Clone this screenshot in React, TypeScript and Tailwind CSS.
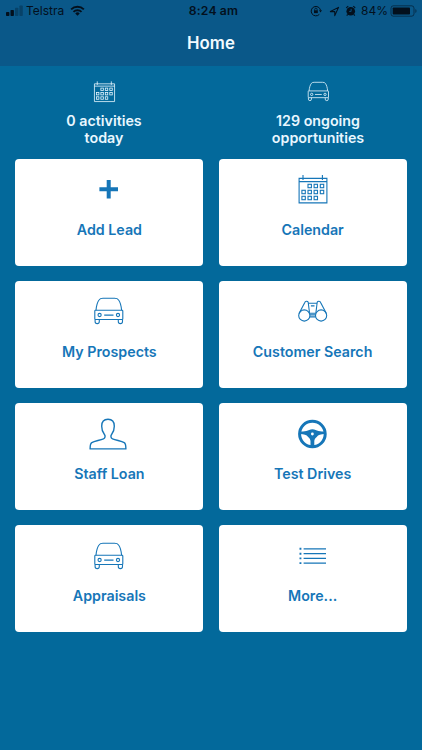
import type { ReactNode } from "react";

type IconProps = { className?: string };

function Svg({ className = "size-10", children }: IconProps & { children: ReactNode }) {
  return (
    <svg viewBox="0 0 40 40" fill="none" stroke="currentColor" strokeWidth="1.1" className={`shrink-0 ${className}`}>
      {children}
    </svg>
  );
}

const days = [
  [16.7, 17], [22.8, 17], [29, 17],
  [10.6, 23], [16.7, 23], [22.8, 23], [29, 23],
  [10.6, 29], [16.7, 29], [22.8, 29],
];

function CalendarIcon({ className }: IconProps) {
  return (
    <Svg className={className}>
      <path d="M6.1 9.4H33.9V33.9H6.1ZM6.1 12.6H33.9M10 6V11M29.4 6V11" />
      {days.map(([x, y]) => (
        <rect key={`${x}-${y}`} x={x - 1.7} y={y - 1.7} width="3.4" height="3.4" />
      ))}
    </Svg>
  );
}

function CarIcon({ className }: IconProps) {
  return (
    <Svg className={className}>
      <path d="M7 19.2C7.4 14.6 8.5 11.1 10 9C10.8 7.8 12 7.3 14 7.3H25.6C27.6 7.3 28.8 7.8 29.6 9C31.1 11.1 32.2 14.6 32.6 19.2" />
      <rect x="5.8" y="19.2" width="28" height="9.3" rx=".7" />
      <path d="M6.1 28.5V30.5a2.1 2.1 0 0 0 4.2 0V28.5M29.3 28.5V30.5a2.1 2.1 0 0 0 4.2 0V28.5M15.2 24.1H24.5" />
      <circle cx="10.6" cy="24" r="1.6" />
      <circle cx="29" cy="24" r="1.6" />
    </Svg>
  );
}

function PlusIcon() {
  return (
    <Svg>
      <path d="M10.4 20.2H29M19.7 10.9V29.5" strokeWidth="4" />
    </Svg>
  );
}

function BinocularsIcon() {
  return (
    <Svg>
      <circle cx="11.3" cy="24.5" r="5.6" />
      <circle cx="28.1" cy="24.5" r="5.6" />
      <path d="M6 22.6L11.8 11.5C12.2 10 14.6 9.8 15.2 11.3L16.5 21.8M33.4 22.6L27.6 11.5C27.2 10 24.8 9.8 24.2 11.3L22.9 21.8M15.4 12.2H24M17.9 14.9H21.5M16.5 22.3H22.9M16.8 23.9H22.6M16.8 25.9H22.6" />
    </Svg>
  );
}

function PersonIcon() {
  return (
    <Svg>
      <path
        strokeWidth="1.4"
        strokeLinejoin="round"
        d="M19 5.3C14.8 5.3 12.7 8.1 12.7 12.2C12.7 15.4 13.7 18.3 15.3 20.2C16.6 21.8 16.3 23.9 14.4 24.8C11.2 26.2 5.8 27.1 2.8 28.6C1.2 29.5 1.1 31.5 1.1 34.9H36.9C36.9 31.5 36.8 29.5 35.2 28.6C32.2 27.1 26.8 26.2 23.6 24.8C21.7 23.9 21.4 21.8 22.7 20.2C24.3 18.3 25.3 15.4 25.3 12.2C25.3 8.1 23.2 5.3 19 5.3Z"
      />
    </Svg>
  );
}

function WheelIcon() {
  return (
    <Svg>
      <g transform="translate(-.4 -.2)">
        <circle cx="19.8" cy="20.2" r="12.8" strokeWidth="3" />
        <path
          fill="currentColor"
          stroke="none"
          fillRule="evenodd"
          d="M7.5 17.4C11 17.9 14.3 17.5 16.6 16.2C18.4 15.3 21.2 15.3 23 16.2C25.3 17.5 28.6 17.9 32.1 17.4V20.3C28.3 20.3 25.6 21.3 24.1 23.1C22.4 24.7 21.7 25.6 21.7 27.5V33H17.9V27.5C17.9 25.6 17.2 24.7 15.5 23.1C14 21.3 11.3 20.3 7.5 20.3ZM19.8 18.8a1.4 1.4 0 1 0 0 2.8a1.4 1.4 0 0 0 0-2.8Z"
        />
      </g>
    </Svg>
  );
}

function ListIcon() {
  return (
    <Svg>
      <path strokeWidth="1.2" d="M10.6 12.8H33M10.6 17.7H33M10.6 22.4H33M10.6 27.1H33" />
      <path strokeWidth="1.9" d="M6.5 12.8H8.4M6.5 17.7H8.4M6.5 22.4H8.4M6.5 27.1H8.4" />
    </Svg>
  );
}

function StatusBar() {
  return (
    <div className="grid h-[22px] grid-cols-[1fr_auto_1fr] items-center px-[6px] text-[12px] leading-none text-[#03101d]">
      <div className="flex items-center">
        <svg viewBox="0 0 18 12" className="h-3 w-[18px]" fill="currentColor">
          <rect x="0" y="7" width="3.4" height="4" rx=".8" />
          <rect x="4.5" y="5" width="3.4" height="6" rx=".8" />
          <rect x="9" y="2.8" width="3.4" height="8.2" rx=".8" opacity=".3" />
          <rect x="13.4" y=".5" width="3.4" height="10.5" rx=".8" opacity=".3" />
        </svg>
        <span className="ml-[2px] text-[12px]">Telstra</span>
        <svg viewBox="0 0 16 12" className="ml-[6px] h-[11.5px] w-[15px]" fill="none" stroke="currentColor" strokeWidth="2">
          <path d="M1.2 4.5A9.7 9.7 0 0 1 14.8 4.5M3.7 7.2A6.2 6.2 0 0 1 12.3 7.2" />
          <path d="M5.6 8.8A3.5 3.5 0 0 1 10.4 8.8L8 11.3Z" fill="currentColor" stroke="none" />
        </svg>
      </div>
      <span className="pl-[5px] text-[12.2px] font-semibold tracking-[0.15px]">8:24 am</span>
      <div className="-mr-[2px] flex items-center justify-end">
        <svg viewBox="0 0 12 12" className="mr-[2px] size-3" fill="none" stroke="currentColor">
          <path d="M9.3 9.4A4.7 4.7 0 1 1 10.5 5.2" />
          <path d="M9 5.2H12L10.5 7.4Z" fill="currentColor" stroke="none" />
          <path d="M4.7 5.5V4.4a1.2 1.2 0 0 1 2.4 0v1.1" strokeWidth=".8" />
          <rect x="4" y="5.3" width="3.8" height="2.8" fill="currentColor" stroke="none" />
        </svg>
        <svg viewBox="0 0 12 12" className="ml-[5px] size-[11px]" fill="none" stroke="currentColor" strokeWidth="1.2">
          <path d="M1.5 6.1L10.4 1.5L6.3 10.5V6.1Z" strokeLinejoin="round" />
        </svg>
        <svg viewBox="0 0 12 12" className="ml-[5px] size-[11.5px]" fill="currentColor">
          <circle cx="6" cy="6.5" r="4.5" />
          <path d="M1.3 3L3.4 1.2M10.7 3L8.6 1.2M2.8 9.8L1.8 11M9.2 9.8L10.2 11" stroke="currentColor" strokeWidth="1.2" />
          <path d="M6.4 4V6.7H4.4" stroke="#0a5889" fill="none" strokeWidth=".9" />
        </svg>
        <span className="ml-[5px] text-[12px]">84%</span>
        <svg viewBox="0 0 28 12" className="ml-[2px] h-3 w-7" fill="none">
          <rect x="1" y=".8" width="23" height="10.4" rx="2.4" stroke="currentColor" opacity=".55" />
          <rect x="2.7" y="2.5" width="17.3" height="7" rx=".8" fill="currentColor" />
          <path d="M25.3 4V8C27 7.3 27 4.7 25.3 4Z" fill="currentColor" opacity=".55" />
        </svg>
      </div>
    </div>
  );
}

const tiles: { label: string; icon: ReactNode }[] = [
  { label: "Add Lead", icon: <PlusIcon /> },
  { label: "Calendar", icon: <CalendarIcon /> },
  { label: "My Prospects", icon: <CarIcon /> },
  { label: "Customer Search", icon: <BinocularsIcon /> },
  { label: "Staff Loan", icon: <PersonIcon /> },
  { label: "Test Drives", icon: <WheelIcon /> },
  { label: "Appraisals", icon: <CarIcon /> },
  { label: "More...", icon: <ListIcon /> },
];

function Stat({ icon, lines }: { icon: ReactNode; lines: string[] }) {
  return (
    <div className="flex w-[170px] flex-col items-center text-center text-[14.25px] leading-[17px] font-semibold text-[#e9f7ff]">
      {icon}
      <div className="mt-[6px]">
        {lines.map((line) => (
          <div key={line}>{line}</div>
        ))}
      </div>
    </div>
  );
}

export default function App() {
  return (
    <div className="h-[750px] w-[422px] overflow-hidden bg-[#03699b] font-['Inter',sans-serif]">
      <header className="h-[66px] bg-[#0a5889]">
        <StatusBar />
        <h1 className="text-center text-[16.8px] leading-[42px] font-semibold text-[#f2faff]">Home</h1>
      </header>
      <section className="flex h-[92.6px] justify-center gap-[44px] pt-[10.5px]">
        <Stat icon={<CalendarIcon className="size-[29px]" />} lines={["0 activities", "today"]} />
        <Stat icon={<CarIcon className="size-[29px]" />} lines={["129 ongoing", "opportunities"]} />
      </section>
      <main className="grid grid-cols-2 gap-x-[15.3px] gap-y-[15.3px] px-[15.4px]">
        {tiles.map(({ label, icon }) => (
          <button
            key={label}
            type="button"
            className="flex h-[107px] flex-col items-center rounded-[4px] bg-white pt-[10.5px] text-[#1676b8]"
          >
            {icon}
            <span className="mt-[10.5px] text-[14.25px] leading-5 font-semibold whitespace-nowrap">{label}</span>
          </button>
        ))}
      </main>
    </div>
  );
}
